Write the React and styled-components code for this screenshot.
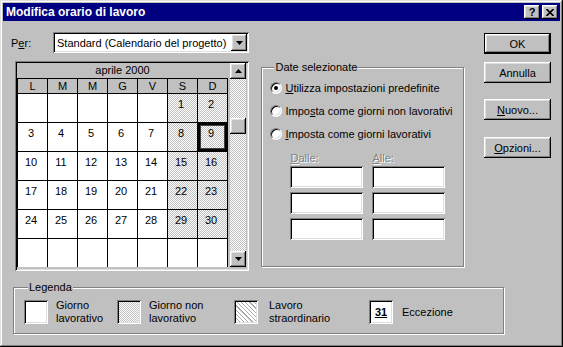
import styled, { createGlobalStyle, css } from "styled-components";

const GlobalStyle = createGlobalStyle`
  html, body { margin: 0; padding: 0; background: #c0c0c0; }
  body {
    font-family: "Liberation Sans", Arial, sans-serif;
    font-size: 11px;
    color: #000;
  }
  u { text-underline-offset: 1px; }
`;

const raised = css`
  background: #c0c0c0;
  box-shadow: inset -1px -1px #000, inset 1px 1px #fff,
    inset -2px -2px #808080, inset 2px 2px #dfdfdf;
`;

const sunken = css`
  box-shadow: inset 1px 1px #808080, inset -1px -1px #fff,
    inset 2px 2px #000, inset -2px -2px #dfdfdf;
`;

const dither = css`
  background: repeating-conic-gradient(#c0c0c0 0% 25%, #fff 0% 50%) 0 0 / 2px 2px;
`;

const Window = styled.div`
  width: 563px;
  height: 347px;
  box-sizing: border-box;
  padding: 3px;
  background: #c0c0c0;
  box-shadow: inset -1px -1px #000, inset 1px 1px #dfdfdf,
    inset -2px -2px #808080, inset 2px 2px #fff;
  display: flex;
  flex-direction: column;
`;

const TitleBar = styled.div`
  height: 18px;
  background: #000080;
  display: flex;
  align-items: center;
  justify-content: space-between;
  padding: 0 2px 0 3px;
`;

const Title = styled.span`
  color: #fff;
  font-weight: bold;
  font-size: 12px;
`;

const CaptionButtons = styled.div`
  display: flex;
  gap: 2px;
`;

const CaptionButton = styled.div`
  ${raised};
  width: 16px;
  height: 14px;
  box-sizing: border-box;
  display: flex;
  align-items: center;
  justify-content: center;
  font-weight: bold;
  font-size: 11px;
  line-height: 14px;
`;

const Body = styled.div`
  flex: 1;
  padding: 11px 9px 0 8px;
  display: flex;
  flex-direction: column;
`;

const TopRow = styled.div`
  display: flex;
  justify-content: space-between;
`;

const Main = styled.div`
  width: 453px;
  display: flex;
  flex-direction: column;
`;

const PerRow = styled.div`
  display: flex;
  align-items: center;
  height: 21px;
`;

const FieldLabel = styled.span`
  width: 42px;
`;

const Combo = styled.div`
  ${sunken};
  background: #fff;
  width: 196px;
  height: 21px;
  box-sizing: border-box;
  padding: 2px;
  display: flex;
  align-items: center;
  justify-content: space-between;
`;

const ComboText = styled.span`
  padding-left: 2px;
`;

const ArrowButton = styled.div`
  ${raised};
  width: ${(p) => p.$w || 16}px;
  height: ${(p) => p.$h || 17}px;
  flex: none;
  display: flex;
  align-items: center;
  justify-content: center;
`;

const ContentRow = styled.div`
  display: flex;
  align-items: flex-start;
  margin-top: 8px;
`;

const CalendarPanel = styled.div`
  ${sunken};
  margin-left: 4px;
  width: 235px;
  height: 210px;
  box-sizing: border-box;
  padding: 2px;
  background: #c0c0c0;
  display: flex;
`;

const Grid = styled.div`
  display: grid;
  grid-template-columns: repeat(7, 29px);
  grid-template-rows: 15px 14px repeat(6, 28px);
  gap: 1px;
  padding: 0 1px 0 1px;
  background: #000;
  align-self: flex-start;
`;

const MonthHeader = styled.div`
  grid-column: 1 / -1;
  background: #c0c0c0;
  text-align: center;
  line-height: 15px;
  margin: 0 -1px;
`;

const DayHead = styled.div`
  background: #c0c0c0;
  text-align: center;
  line-height: 14px;
`;

const Cell = styled.div`
  background: #fff;
  ${(p) => p.$off && dither};
  text-align: center;
  padding: 4px 3px 0 0;
  line-height: 12px;
  box-shadow: ${(p) =>
    p.$selected ? "inset 0 0 0 2px #000, inset 0 0 0 3px #404040" : "none"};
`;

const ScrollBar = styled.div`
  ${dither};
  width: 16px;
  margin-left: 2px;
  display: flex;
  flex-direction: column;
  height: 204px;
`;

const Thumb = styled.div`
  ${raised};
  width: 16px;
  height: 16px;
  margin-top: ${(p) => p.$offset}px;
`;

const Spacer = styled.div`
  flex: 1;
`;

const Group = styled.fieldset`
  margin: 0;
  padding: 0;
  min-inline-size: 0;
  border: 1px solid #808080;
  box-shadow: inset 1px 1px #fff, 1px 1px #fff;
`;

const GroupLabel = styled.legend`
  padding: 0 1px;
  margin-left: 4px;
  line-height: 13px;
  background: #c0c0c0;
`;

const DatesGroup = styled(Group)`
  margin: 0 0 0 12px;
  width: 203px;
  height: 206px;
  box-sizing: border-box;
  padding: 2px 0 0 8px;
`;

const RadioRow = styled.div`
  display: flex;
  align-items: center;
  height: 23px;
  gap: 3px;
`;

const RadioCircle = styled.span`
  width: 12px;
  height: 12px;
  box-sizing: border-box;
  border-radius: 50%;
  background: #fff;
  border: 1px solid;
  border-color: #808080 #fff #fff #808080;
  box-shadow: inset 1px 1px #000, inset -1px -1px #dfdfdf;
  display: flex;
  align-items: center;
  justify-content: center;
`;

const RadioDot = styled.span`
  width: 4px;
  height: 4px;
  border-radius: 50%;
  background: #000;
`;

const TimeGrid = styled.div`
  display: grid;
  grid-template-columns: 73px 73px;
  column-gap: 9px;
  row-gap: 4px;
  margin: 7px 0 0 20px;
`;

const DisabledLabel = styled.span`
  color: #808080;
  text-shadow: 1px 1px #fff;
  line-height: 13px;
  margin-bottom: -3px;
`;

const TextBox = styled.div`
  ${sunken};
  background: #fff;
  height: 22px;
`;

const ButtonCol = styled.div`
  width: 67px;
  display: flex;
  flex-direction: column;
  padding-top: 1px;
`;

const Button = styled.div`
  ${raised};
  height: 21px;
  box-sizing: border-box;
  display: flex;
  align-items: center;
  justify-content: center;
  margin-top: ${(p) => p.$mt || 0}px;
  ${(p) =>
    p.$default &&
    css`
      box-shadow: inset 0 0 0 1px #000, inset -2px -2px #000, inset 2px 2px #fff,
        inset -3px -3px #808080, inset 3px 3px #dfdfdf;
    `}
`;

const LegendGroup = styled(Group)`
  margin: 10px 0 0 2px;
  width: 491px;
  height: 53px;
  box-sizing: border-box;
  padding: 5px 0 0 10px;
  display: flex;
`;

const LegendItem = styled.div`
  display: flex;
  align-items: center;
  gap: ${(p) => p.$gap}px;
  width: ${(p) => p.$w}px;
  flex: none;
`;

const Swatch = styled.div`
  ${sunken};
  width: 24px;
  height: 24px;
  flex: none;
  background: #fff;
  ${(p) => p.$kind === "off" && dither};
  ${(p) =>
    p.$kind === "hatch" &&
    css`
      background: repeating-linear-gradient(45deg, #fff 0 2px, #a8a8a8 2px 3px);
    `}
  display: flex;
  align-items: center;
  justify-content: center;
  font-weight: bold;
  font-size: 11px;
`;

const LegendText = styled.span`
  line-height: 13px;
  white-space: pre-line;
`;

const Triangle = ({ up }) => (
  <svg width="7" height="4" viewBox="0 0 7 4">
    <path d={up ? "M3.5 0 L7 4 L0 4 Z" : "M0 0 L7 0 L3.5 4 Z"} fill="#000" />
  </svg>
);

const CloseIcon = () => (
  <svg width="8" height="7" viewBox="0 0 8 7">
    <path d="M0.5 0 L7.5 7 M7.5 0 L0.5 7" stroke="#000" strokeWidth="1.6" />
  </svg>
);

const days = ["L", "M", "M", "G", "V", "S", "D"];

const weeks = [
  [null, null, null, null, null, 1, 2],
  [3, 4, 5, 6, 7, 8, 9],
  [10, 11, 12, 13, 14, 15, 16],
  [17, 18, 19, 20, 21, 22, 23],
  [24, 25, 26, 27, 28, 29, 30],
  [null, null, null, null, null, null, null],
];

const radios = [
  { label: <><u>U</u>tilizza impostazioni predefinite</>, checked: true },
  { label: <>Impo<u>s</u>ta come giorni non lavorativi</> },
  { label: <><u>I</u>mposta come giorni lavorativi</> },
];

const legend = [
  { kind: "work", text: "Giorno\nlavorativo", w: 93, gap: 8 },
  { kind: "off", text: "Giorno non\nlavorativo", w: 117, gap: 8 },
  { kind: "hatch", text: "Lavoro\nstraordinario", w: 135, gap: 11 },
  { kind: "exc", text: "Eccezione", w: 100, gap: 9 },
];

export default function App() {
  return (
    <>
      <GlobalStyle />
      <Window>
        <TitleBar>
          <Title>Modifica orario di lavoro</Title>
          <CaptionButtons>
            <CaptionButton>?</CaptionButton>
            <CaptionButton>
              <CloseIcon />
            </CaptionButton>
          </CaptionButtons>
        </TitleBar>
        <Body>
          <TopRow>
            <Main>
              <PerRow>
                <FieldLabel>
                  P<u>e</u>r:
                </FieldLabel>
                <Combo>
                  <ComboText>Standard (Calendario del progetto)</ComboText>
                  <ArrowButton>
                    <Triangle />
                  </ArrowButton>
                </Combo>
              </PerRow>
              <ContentRow>
                <CalendarPanel>
                  <Grid>
                    <MonthHeader>aprile 2000</MonthHeader>
                    {days.map((d, i) => (
                      <DayHead key={i}>{d}</DayHead>
                    ))}
                    {weeks.flat().map((n, i) => (
                      <Cell
                        key={i}
                        $off={n !== null && i % 7 >= 5}
                        $selected={n === 9}
                      >
                        {n}
                      </Cell>
                    ))}
                  </Grid>
                  <ScrollBar>
                    <ArrowButton $h={16}>
                      <Triangle up />
                    </ArrowButton>
                    <Thumb $offset={39} />
                    <Spacer />
                    <ArrowButton $h={16}>
                      <Triangle />
                    </ArrowButton>
                  </ScrollBar>
                </CalendarPanel>
                <DatesGroup>
                  <GroupLabel>Date selezionate</GroupLabel>
                  {radios.map((r, i) => (
                    <RadioRow key={i}>
                      <RadioCircle>{r.checked && <RadioDot />}</RadioCircle>
                      <span>{r.label}</span>
                    </RadioRow>
                  ))}
                  <TimeGrid>
                    <DisabledLabel>
                      <u>D</u>alle:
                    </DisabledLabel>
                    <DisabledLabel>
                      <u>A</u>lle:
                    </DisabledLabel>
                    <TextBox />
                    <TextBox />
                    <TextBox />
                    <TextBox />
                    <TextBox />
                    <TextBox />
                  </TimeGrid>
                </DatesGroup>
              </ContentRow>
            </Main>
            <ButtonCol>
              <Button $default>OK</Button>
              <Button $mt={8}>Annulla</Button>
              <Button $mt={16}>
                <span>
                  <u>N</u>uovo...
                </span>
              </Button>
              <Button $mt={17}>
                <span>
                  <u>O</u>pzioni...
                </span>
              </Button>
            </ButtonCol>
          </TopRow>
          <LegendGroup>
            <GroupLabel>Legenda</GroupLabel>
            {legend.map((l) => (
              <LegendItem key={l.kind} $w={l.w} $gap={l.gap}>
                <Swatch $kind={l.kind}>
                  {l.kind === "exc" && <u>31</u>}
                </Swatch>
                <LegendText>{l.text}</LegendText>
              </LegendItem>
            ))}
          </LegendGroup>
        </Body>
      </Window>
    </>
  );
}
